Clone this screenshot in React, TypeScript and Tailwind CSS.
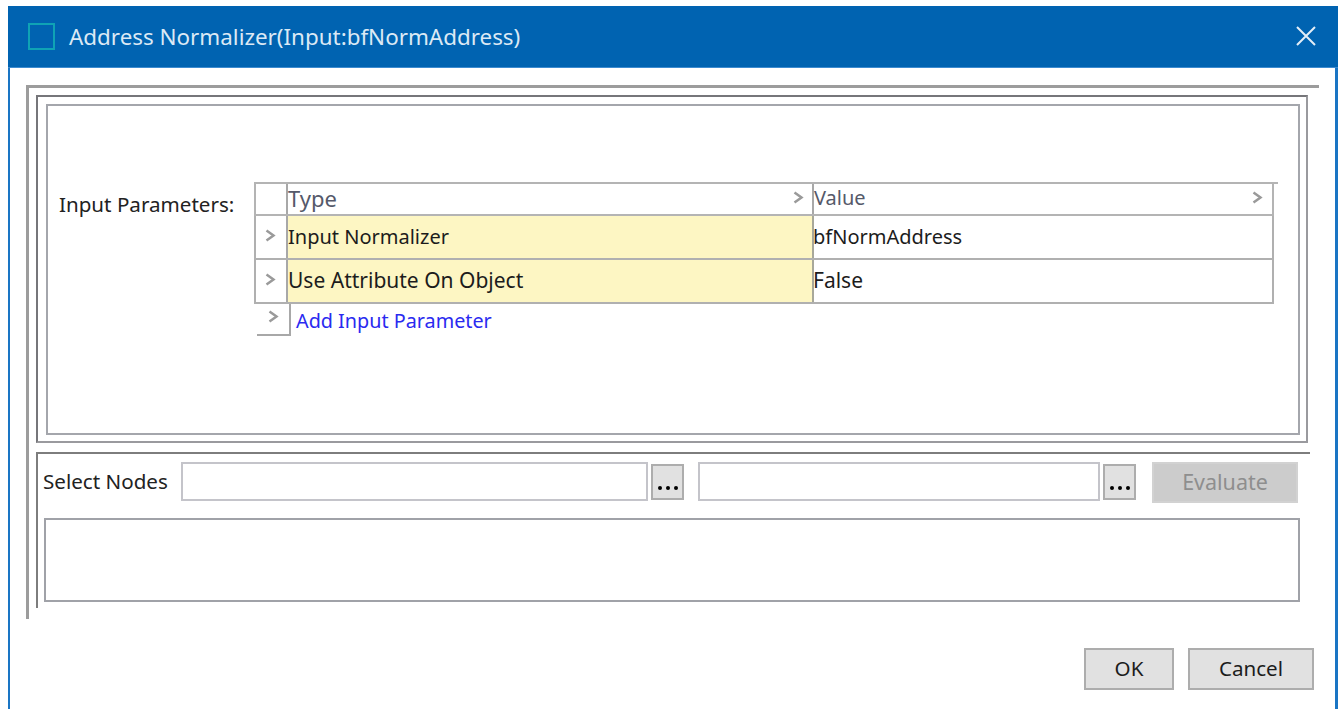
import React from 'react'

const tahoma = "font-['Noto_Sans','Open_Sans',sans-serif]"

const Chevron = ({ className = '' }: { className?: string }) => (
    <svg width="11" height="13" viewBox="0 0 11 13" className={className} fill="none">
        <polyline points="1.5,1.5 8.5,6.5 1.5,11.5" stroke="#9a9a9a" strokeWidth="2.5" />
    </svg>
)

const rows = [
    { type: 'Input Normalizer', value: 'bfNormAddress', typeSize: 'text-[20px]', valueSize: 'text-[20px]' },
    { type: 'Use Attribute On Object', value: 'False', typeSize: 'text-[21px]', valueSize: 'text-[21px]' },
]

const ParamsTable = () => (
    <div className="w-[1024px] text-[20px] leading-none text-[#1c1c1c]">
        {/* only the top rule runs past the last column */}
        <div className="w-[1024px] border-t-2 border-[#b4b4b4]">
            <div className="flex h-[32px] w-[1020px] border-l-2 border-b-2 border-[#b4b4b4]">
                <div className="w-[32px] shrink-0 border-r-2 border-[#a8a8a8]" />
                <div className="w-[526px] shrink-0 flex items-center justify-between pr-[8px] border-r-2 border-[#a8a8a8] text-[#55596a]">
                    <span className="text-[22px] -mt-[3px]">Type</span>
                    <Chevron className="-mt-[3px]" />
                </div>
                <div className="w-[460px] shrink-0 flex items-center justify-between pr-[9px] border-r-2 border-[#b4b4b4] text-[#55596a]">
                    <span className="-mt-[2px]">Value</span>
                    <Chevron className="-mt-[3px]" />
                </div>
            </div>
        </div>
        {rows.map((row) => (
            <div key={row.type} className="flex h-[44px] w-[1020px] border-l-2 border-b-2 border-[#b0b0b0]">
                <div className="w-[32px] shrink-0 flex items-center justify-center border-r-2 border-[#a8a8a8]">
                    <Chevron className="-mt-[3px] -ml-px" />
                </div>
                <div className={`w-[526px] shrink-0 flex items-center bg-[#fdf6c3] border-r-2 border-[#a8a89a] ${row.typeSize}`}>
                    <span className="-mt-px">{row.type}</span>
                </div>
                <div className={`flex-1 flex items-center border-r-2 border-[#b0b0b0] ${row.valueSize}`}>
                    <span className="-mt-px -ml-px">{row.value}</span>
                </div>
            </div>
        ))}
        <div className="flex">
            <div className="ml-[3px] w-[34px] h-[32px] flex items-center justify-center border-r-2 border-b-2 border-[#a8a8a8]">
                <Chevron className="-mt-[5px]" />
            </div>
            <span className="ml-[5px] mt-[7px] text-[19.8px] text-[#2a2af0]">Add Input Parameter</span>
        </div>
    </div>
)

const BrowseButton = () => (
    <button className="ml-[3px] mt-[2px] w-[33px] h-[36px] flex items-end justify-center gap-[4px] pb-[8px] bg-[#e1e1e1] border-2 border-[#adadad]">
        <span className="w-[4px] h-[4px] rounded-full bg-black" />
        <span className="w-[4px] h-[4px] rounded-full bg-black" />
        <span className="w-[4px] h-[4px] rounded-full bg-black" />
    </button>
)

const App = () => {
    return (
        <div className={`h-[709px] w-[1340px] overflow-hidden bg-white pt-[6px] pl-[8px] pr-[2px] ${tahoma}`}>
            <div className="h-[703px] border-l-2 border-r-[3px] border-[#1a75c4] bg-white">
                {/* title bar */}
                <div className="-mx-[2px] -mr-[3px] h-[62px] bg-[#0063b1] flex items-center pl-[20px] pr-[22px] border-b border-[#3d8bd0]">
                    <div className="w-[27px] h-[27px] border-2 border-[#0fa3b5]" />
                    <span className="ml-[14px] text-[22.4px] text-[#dbe9f5]">
                        Address Normalizer(Input:bfNormAddress)
                    </span>
                    <svg width="20" height="20" viewBox="0 0 20 20" className="ml-auto -mt-[2px]" fill="none">
                        <path d="M1 1 L19 19 M19 1 L1 19" stroke="#e4eef7" strokeWidth="2" />
                    </svg>
                </div>

                <div className="pl-[16px] pt-[17px]">
                    <div className="w-[1293px] h-[534px] border-t-[3px] border-l-[3px] border-[#9c9c9c] pt-[7px] pl-[7px]">
                        {/* parameters panel */}
                        <div className="w-[1272px] h-[348px] border-2 border-[#9a9a9e] border-t-[#76767a] border-l-[#76767a] pt-[7px] pl-[8px]">
                            <div className="w-[1254px] h-[331px] border-2 border-[#a4a6ac] flex pt-[76px] pl-[11px]">
                                <div className="w-[195px] shrink-0 pt-[12px] text-[20.6px] leading-none text-[#222]">
                                    Input Parameters:
                                </div>
                                <ParamsTable />
                            </div>
                        </div>

                        {/* node selection panel */}
                        <div className="mt-[9px] w-[1274px] h-[156px] border-t-2 border-l-2 border-[#7d7d7d] pt-[8px]">
                            <div className="flex items-start pl-[5px]">
                                <div className="w-[138px] h-[39px] flex items-center text-[20.6px] text-[#222]">
                                    Select Nodes
                                </div>
                                <div className="w-[467px] h-[39px] border-2 border-[#c4c4ca] bg-white" />
                                <BrowseButton />
                                <div className="ml-[14px] w-[402px] h-[39px] border-2 border-[#c4c4ca] bg-white" />
                                <BrowseButton />
                                <button className="ml-[16px] w-[146px] h-[41px] bg-[#cccccc] border-2 border-[#d2d2d2] text-[21.5px] text-[#8e8e8e]">
                                    Evaluate
                                </button>
                            </div>
                            <div className="ml-[6px] mt-[15px] w-[1256px] h-[84px] border-2 border-[#a0a2a8]" />
                        </div>
                    </div>

                    {/* dialog actions */}
                    <div className="mt-[29px] flex justify-end gap-[14px] pr-[21px]">
                        <button className="w-[90px] h-[42px] pb-[2px] bg-[#e1e1e1] border-2 border-[#adadad] text-[20.6px] text-[#1c1c1c]">
                            OK
                        </button>
                        <button className="w-[126px] h-[42px] pb-[2px] bg-[#e1e1e1] border-2 border-[#adadad] text-[20.6px] text-[#1c1c1c]">
                            Cancel
                        </button>
                    </div>
                </div>
            </div>
        </div>
    )
}

export default App
